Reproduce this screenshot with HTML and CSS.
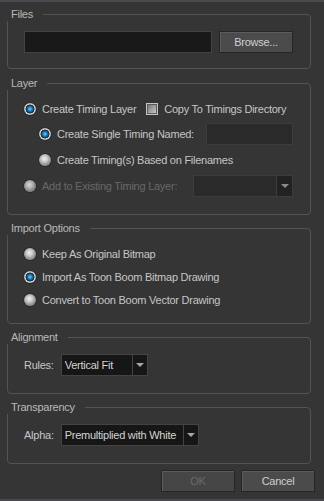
FILE: index.html
```html
<!DOCTYPE html>
<html lang="en">
    <head>
        <meta charset="UTF-8">
        <meta name="viewport" content="width=device-width, initial-scale=1.0">
        <title>Import Images</title>
        <link rel="stylesheet" href="styles.css">
    </head>
    <body>
        <div class="dialog">
            <fieldset class="group group-files">
                <legend>Files</legend>
                <div class="row row-files">
                    <div class="field field-path"></div>
                    <button class="btn">Browse...</button>
                </div>
            </fieldset>

            <fieldset class="group group-layer">
                <legend>Layer</legend>
                <div class="row row-top">
                    <label class="option"><span class="radio checked"></span>Create Timing Layer</label>
                    <label class="option option-check"><span class="check"></span>Copy To Timings Directory</label>
                </div>
                <div class="row row-sub">
                    <label class="option"><span class="radio checked"></span>Create Single Timing Named:</label>
                    <div class="field field-name"></div>
                </div>
                <div class="row row-sub">
                    <label class="option"><span class="radio"></span>Create Timing(s) Based on Filenames</label>
                </div>
                <div class="row row-sub row-existing">
                    <label class="option disabled"><span class="radio"></span>Add to Existing Timing Layer:</label>
                    <div class="combo combo-layer disabled">
                        <span class="combo-value"></span>
                        <span class="combo-arrow"></span>
                    </div>
                </div>
            </fieldset>

            <fieldset class="group group-import">
                <legend>Import Options</legend>
                <div class="row row-option">
                    <label class="option"><span class="radio"></span>Keep As Original Bitmap</label>
                </div>
                <div class="row row-option">
                    <label class="option"><span class="radio checked"></span>Import As Toon Boom Bitmap Drawing</label>
                </div>
                <div class="row row-option">
                    <label class="option"><span class="radio"></span>Convert to Toon Boom Vector Drawing</label>
                </div>
            </fieldset>

            <fieldset class="group group-single">
                <legend>Alignment</legend>
                <div class="row row-combo">
                    <span class="label">Rules:</span>
                    <div class="combo combo-rules">
                        <span class="combo-value">Vertical Fit</span>
                        <span class="combo-arrow"></span>
                    </div>
                </div>
            </fieldset>

            <fieldset class="group group-single">
                <legend>Transparency</legend>
                <div class="row row-combo">
                    <span class="label">Alpha:</span>
                    <div class="combo combo-alpha">
                        <span class="combo-value">Premultiplied with White</span>
                        <span class="combo-arrow"></span>
                    </div>
                </div>
            </fieldset>

            <div class="actions">
                <button class="btn" disabled>OK</button>
                <button class="btn">Cancel</button>
            </div>
        </div>
    </body>
</html>
```

FILE: styles.css
```css
html, body {
    margin: 0;
    height: 100%;
}
body {
    background: #353535;
    border-top: 2px solid #474a4e;
    border-bottom: 2px solid #474a4e;
    box-sizing: border-box;
    color: #c6c6c6;
    font-family: "Liberation Sans", Arial, sans-serif;
    font-size: 11px;
    letter-spacing: -0.25px;
}
.dialog {
    padding: 6px 13px 0 7px;
}

/* group boxes */
.group {
    border: 1px solid #535353;
    border-radius: 4px;
    margin: 0 0 7px;
    min-inline-size: 0;
    padding: 0 17px 0 16px;
}
.group legend {
    color: #b9b9b9;
    line-height: 13px;
    margin-left: -17px;
    padding: 0 10px 0 4px;
}
.group-files {
    margin-bottom: 8px;
    padding-top: 10px;
    padding-bottom: 15px;
}
.group-layer {
    padding-top: 7px;
    padding-bottom: 15px;
}
.group-import {
    padding-top: 7px;
    padding-bottom: 12px;
}
.group-single {
    padding-top: 10px;
    padding-bottom: 17px;
}

/* rows */
.row {
    align-items: center;
    display: flex;
}
.row-files {
    gap: 7px;
    height: 22px;
}
.row-top {
    height: 24px;
}
.row-sub {
    height: 26px;
    padding-left: 15px;
}
.row-existing {
    padding-left: 0;
}
.row-option {
    height: 23px;
}
.row-combo {
    gap: 7px;
    height: 22px;
}

/* options */
.option {
    align-items: center;
    display: flex;
    white-space: nowrap;
}
.option.disabled {
    color: #686868;
}
.option-check {
    margin-left: 10px;
}
.radio {
    background: radial-gradient(circle at 45% 40%, #f0f0f0 0, #cacaca 3px, #929292 6px);
    border-radius: 50%;
    box-shadow: 0 0 0 1px #2c2c2c;
    flex: none;
    height: 12px;
    margin-right: 6px;
    width: 12px;
}
.radio.checked {
    background: radial-gradient(circle at 50% 50%, #7fd0fa 0, #1f8acb 1.8px, #0f5686 3.2px, #1d1d1d 4.2px, #e2e2e2 4.8px, #a9a9a9 6px);
}
.disabled .radio {
    background: radial-gradient(circle at 45% 40%, #d6d6d6 0, #b4b4b4 3px, #858585 6px);
}
.check {
    background: linear-gradient(135deg, #6f6f6f, #cfcfcf);
    border: 1px solid #c4c4c4;
    box-shadow: inset 0 0 0 1px #5a5a5a;
    box-sizing: border-box;
    flex: none;
    height: 12px;
    margin-right: 6px;
    width: 12px;
}

/* inputs */
.field {
    border: 1px solid #434343;
    box-sizing: border-box;
    height: 22px;
}
.field-path {
    background: #191919;
    width: 188px;
}
.field-name {
    background: #2a2a2a;
    border-color: #3c3c3c;
    margin-left: auto;
    width: 87px;
}
.combo {
    background: #161616;
    border: 1px solid #434343;
    box-sizing: border-box;
    display: flex;
    height: 22px;
}
.combo-value {
    color: #d4d4d4;
    flex: 1;
    line-height: 20px;
    overflow: hidden;
    padding-left: 3px;
    white-space: nowrap;
}
.combo-arrow {
    align-items: center;
    border-left: 1px solid #434343;
    display: flex;
    justify-content: center;
    width: 14px;
}
.combo-arrow::after {
    border-left: 4px solid transparent;
    border-right: 4px solid transparent;
    border-top: 4px solid #a6a6a6;
    content: "";
}
.combo-rules {
    width: 87px;
}
.combo-alpha {
    width: 138px;
}
.combo-layer {
    background: #2a2a2a;
    border-color: #3c3c3c;
    margin-left: auto;
    width: 100px;
}
.combo-layer .combo-arrow {
    background: #222;
    border-left-color: #3c3c3c;
    width: 15px;
}
.combo-layer .combo-arrow::after {
    border-top-color: #8c8c8c;
}
.label {
    white-space: nowrap;
}

/* buttons */
.btn {
    background: #4b4b4b;
    border: 1px solid #262626;
    border-radius: 0;
    box-shadow: inset 1px 1px 0 #5c5c5c;
    color: #cfcfcf;
    font: inherit;
    height: 22px;
    letter-spacing: inherit;
    padding: 0;
    width: 74px;
}
.btn:disabled {
    background: #464646;
    color: #6a6a6a;
}
.actions {
    display: flex;
    gap: 6px;
    justify-content: flex-end;
    margin: -1px -4px 0 0;
}
```
